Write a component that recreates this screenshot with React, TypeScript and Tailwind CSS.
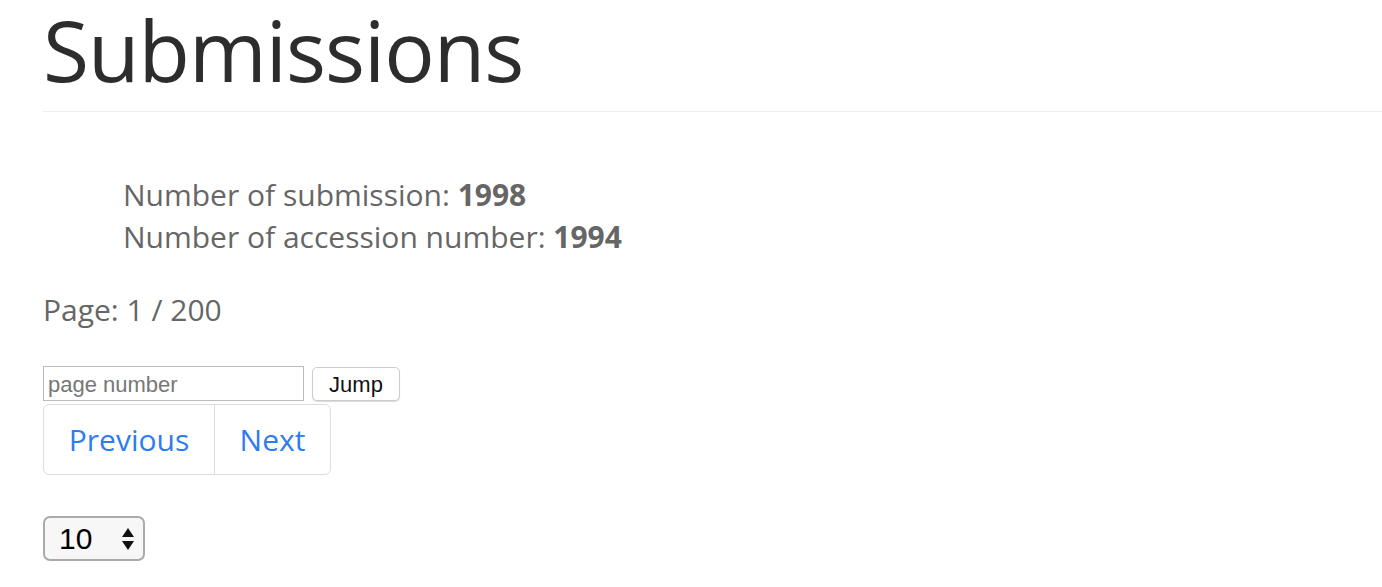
export default function App() {
  return (
    <div className="bg-white min-h-screen pl-[43px] font-['Open_Sans',sans-serif] text-[#666]">
      <h1 className="text-[84px] leading-[100px] tracking-[-1px] text-[#2d2d2d] pb-[11px] border-b border-[#eee]">
        Submissions
      </h1>

      <div className="pl-[80px] pt-[62px] text-[30px] leading-[42px]">
        <div>
          Number of submission: <b>1998</b>
        </div>
        <div>
          Number of accession number: <b>1994</b>
        </div>
      </div>

      <div className="pt-[31px] text-[30px] leading-[42px]">Page: 1 / 200</div>

      <div className="pt-[35px] flex items-center gap-[8px] font-['Liberation_Sans',sans-serif]">
        <input
          placeholder="page number"
          className="w-[261px] h-[35px] border border-[#bbb] px-[4px] pt-[3px] text-[22px] text-[#333] placeholder:text-[#777] outline-none"
        />
        <button className="w-[88px] h-[34px] border border-[#ccc] rounded-[5px] bg-white text-[22px] text-[#111] shadow-[0_1px_1px_rgba(0,0,0,0.15)]">
          Jump
        </button>
      </div>

      <div className="mt-[3px] inline-flex border border-[#ddd] rounded-[6px] h-[71px] text-[30px] text-[#2f7bf0]">
        <a className="flex items-center justify-center border-r border-[#ddd] w-[171px]">Previous</a>
        <a className="flex items-center justify-center w-[115px]">Next</a>
      </div>

      <div className="pt-[41px]">
        <div className="w-[102px] h-[45px] border-2 border-[#aaa] rounded-[7px] bg-[#f7f7f7] flex items-center justify-between pl-[14px] pr-[8px] font-['Liberation_Sans',sans-serif] text-[30px] text-black">
          <span>10</span>
          <svg width="14" height="24" viewBox="0 0 14 24">
            <path d="M7 1 L13 10 L1 10 Z" fill="#111" />
            <path d="M1 14 L13 14 L7 23 Z" fill="#111" />
          </svg>
        </div>
      </div>
    </div>
  );
}
